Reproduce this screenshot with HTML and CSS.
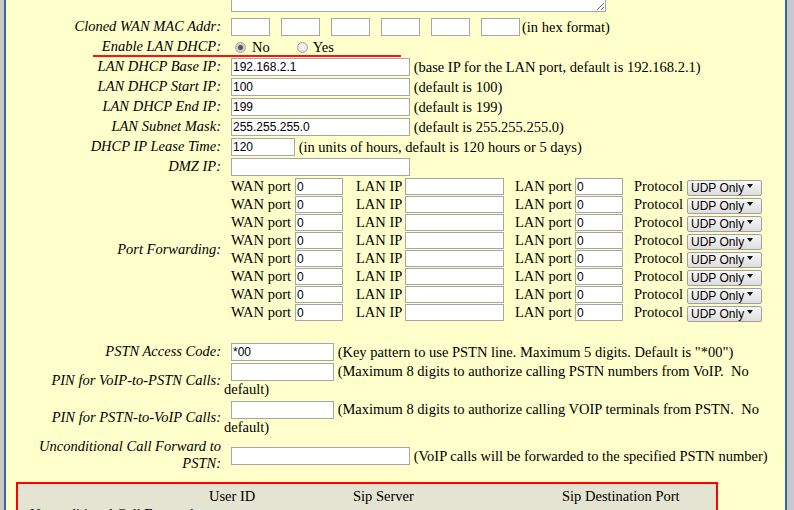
FILE: index.html
```html
<!DOCTYPE html>
<html>
<head>
<meta charset="utf-8">
<title>LAN Settings</title>
<link rel="stylesheet" href="styles.css">
</head>
<body>
<div class="page">
  <div class="form">
    <div class="lbl"></div>
    <div class="val top"><textarea class="ta"></textarea></div>

    <div class="lbl">Cloned WAN MAC Addr:</div>
    <div class="val mac">
      <div class="mac-set">
        <input class="in mac-in"><input class="in mac-in"><input class="in mac-in"><input class="in mac-in"><input class="in mac-in"><input class="in mac-in">
      </div>
      <span class="mac-note">(in hex format)</span>
    </div>

    <div class="lbl">Enable LAN DHCP:</div>
    <div class="val radios">
      <input type="radio" name="dhcp" class="rb rb-first" checked><span class="opt-no">No</span>
      <input type="radio" name="dhcp" class="rb rb-second"><span class="opt-yes">Yes</span>
    </div>

    <div class="lbl">LAN DHCP Base IP:</div>
    <div class="val"><input class="in w-long" value="192.168.2.1"> (base IP for the LAN port, default is 192.168.2.1)</div>

    <div class="lbl">LAN DHCP Start IP:</div>
    <div class="val"><input class="in w-long" value="100"> (default is 100)</div>

    <div class="lbl">LAN DHCP End IP:</div>
    <div class="val"><input class="in w-long" value="199"> (default is 199)</div>

    <div class="lbl">LAN Subnet Mask:</div>
    <div class="val"><input class="in w-long" value="255.255.255.0"> (default is 255.255.255.0)</div>

    <div class="lbl">DHCP IP Lease Time:</div>
    <div class="val"><input class="in w-short" value="120"> (in units of hours, default is 120 hours or 5 days)</div>

    <div class="lbl">DMZ IP:</div>
    <div class="val"><input class="in w-long" value=""></div>

    <div class="lbl">Port Forwarding:</div>
    <div class="val pf">
      <span class="pf-t">WAN port</span><input class="in pf-in" value="0"><span class="pf-t pf-gap13">LAN IP</span><input class="in pf-ip"><span class="pf-t pf-gap11">LAN port</span><input class="in pf-in" value="0"><span class="pf-t pf-gap11">Protocol</span><span class="sel"><select><option>UDP Only</option><option>TCP Only</option><option>Both</option></select></span>
      <span class="pf-t">WAN port</span><input class="in pf-in" value="0"><span class="pf-t pf-gap13">LAN IP</span><input class="in pf-ip"><span class="pf-t pf-gap11">LAN port</span><input class="in pf-in" value="0"><span class="pf-t pf-gap11">Protocol</span><span class="sel"><select><option>UDP Only</option><option>TCP Only</option><option>Both</option></select></span>
      <span class="pf-t">WAN port</span><input class="in pf-in" value="0"><span class="pf-t pf-gap13">LAN IP</span><input class="in pf-ip"><span class="pf-t pf-gap11">LAN port</span><input class="in pf-in" value="0"><span class="pf-t pf-gap11">Protocol</span><span class="sel"><select><option>UDP Only</option><option>TCP Only</option><option>Both</option></select></span>
      <span class="pf-t">WAN port</span><input class="in pf-in" value="0"><span class="pf-t pf-gap13">LAN IP</span><input class="in pf-ip"><span class="pf-t pf-gap11">LAN port</span><input class="in pf-in" value="0"><span class="pf-t pf-gap11">Protocol</span><span class="sel"><select><option>UDP Only</option><option>TCP Only</option><option>Both</option></select></span>
      <span class="pf-t">WAN port</span><input class="in pf-in" value="0"><span class="pf-t pf-gap13">LAN IP</span><input class="in pf-ip"><span class="pf-t pf-gap11">LAN port</span><input class="in pf-in" value="0"><span class="pf-t pf-gap11">Protocol</span><span class="sel"><select><option>UDP Only</option><option>TCP Only</option><option>Both</option></select></span>
      <span class="pf-t">WAN port</span><input class="in pf-in" value="0"><span class="pf-t pf-gap13">LAN IP</span><input class="in pf-ip"><span class="pf-t pf-gap11">LAN port</span><input class="in pf-in" value="0"><span class="pf-t pf-gap11">Protocol</span><span class="sel"><select><option>UDP Only</option><option>TCP Only</option><option>Both</option></select></span>
      <span class="pf-t">WAN port</span><input class="in pf-in" value="0"><span class="pf-t pf-gap13">LAN IP</span><input class="in pf-ip"><span class="pf-t pf-gap11">LAN port</span><input class="in pf-in" value="0"><span class="pf-t pf-gap11">Protocol</span><span class="sel"><select><option>UDP Only</option><option>TCP Only</option><option>Both</option></select></span>
      <span class="pf-t">WAN port</span><input class="in pf-in" value="0"><span class="pf-t pf-gap13">LAN IP</span><input class="in pf-ip"><span class="pf-t pf-gap11">LAN port</span><input class="in pf-in" value="0"><span class="pf-t pf-gap11">Protocol</span><span class="sel"><select><option>UDP Only</option><option>TCP Only</option><option>Both</option></select></span>
    </div>

    <div class="spacer"></div>

    <div class="lbl">PSTN Access Code:</div>
    <div class="val"><input class="in w-mid" value="*00"> (Key pattern to use PSTN line. Maximum 5 digits. Default is "*00")</div>

    <div class="lbl">PIN for VoIP-to-PSTN Calls:</div>
    <div class="val wrap"><input class="in w-mid" value=""> (Maximum 8 digits to authorize calling PSTN numbers from VoIP.&nbsp; No default)</div>

    <div class="lbl">PIN for PSTN-to-VoIP Calls:</div>
    <div class="val wrap"><input class="in w-mid" value=""> (Maximum 8 digits to authorize calling VOIP terminals from PSTN.&nbsp; No default)</div>

    <div class="lbl">Unconditional Call Forward to PSTN:</div>
    <div class="val mid"><input class="in w-long" value=""> (VoIP calls will be forwarded to the specified PSTN number)</div>
  </div>

  <div class="redbox">
    <div class="rb-row">
      <span></span><span>User ID</span><span>Sip Server</span><span>Sip Destination Port</span>
    </div>
    <div class="rb-row">
      <span class="rb-name">Unconditional Call Forward</span><span></span><span></span><span></span>
    </div>
  </div>

  <div class="annot"></div>
</div>
</body>
</html>
```

FILE: styles.css
```css
html, body {
  margin: 0;
  padding: 0;
}
body {
  background: #c9c9c9;
  height: 510px;
  overflow: hidden;
  font-family: "Liberation Serif", "Times New Roman", serif;
  font-size: 14.5px;
  color: #000;
}
.page {
  position: relative;
  margin-left: 4px;
  width: 779px;
  height: 510px;
  border-left: 2px solid #336699;
  border-right: 2px solid #336699;
  background: #ffffcc;
  overflow: hidden;
}
.form {
  display: grid;
  grid-template-columns: 218px 554px;
  row-gap: 2px;
}
.lbl {
  font-style: italic;
  text-align: right;
  padding: 0 3px 1px 20px;
  align-self: center;
  line-height: 17px;
}
.val {
  min-height: 18px;
  line-height: 18px;
  text-indent: 7px;
}
.val.mid {
  align-self: center;
}
.val.wrap {
  line-height: 17.5px;
}
.in {
  box-sizing: border-box;
  height: 18px;
  margin: 0;
  padding: 0 1px;
  border: 1px solid #a6a6a6;
  background: #fff;
  font-family: "Liberation Sans", Arial, sans-serif;
  font-size: 12px;
  color: #000;
  vertical-align: top;
  text-indent: 0;
  outline: none;
}
.w-long { width: 179px; }
.w-mid { width: 103px; }
.w-short { width: 64px; }

.val.top {
  min-height: 0;
  height: 16px;
  text-indent: 0;
  padding-left: 7px;
}
.ta {
  display: block;
  box-sizing: border-box;
  width: 375px;
  height: 12px;
  margin: 0;
  padding: 0;
  border: 1px solid #a6a6a6;
  border-top: none;
  background: #fff;
  resize: both;
  overflow: hidden;
}

.val.mac {
  display: flex;
  align-items: center;
  text-indent: 0;
  padding-left: 7px;
}
.mac-set {
  display: flex;
  gap: 11px;
}
.mac-in {
  width: 39px;
}
.mac-note {
  margin-left: 2px;
}

.val.radios {
  display: flex;
  align-items: center;
  text-indent: 0;
}
.rb {
  appearance: none;
  -webkit-appearance: none;
  box-sizing: border-box;
  width: 11px;
  height: 11px;
  margin: 0;
  border: 1px solid #a2a2a2;
  border-radius: 50%;
  background: radial-gradient(circle at 50% 40%, #f7f7f7 0, #dcdcdc 100%);
}
.rb:checked {
  background: radial-gradient(circle, #505050 0, #5a5a5a 2px, #c8c8c8 3px, #ececec 100%);
}
.rb-first { margin-left: 11px; }
.opt-no { margin-left: 6px; }
.rb-second { margin-left: 27px; }
.opt-yes { margin-left: 5px; }

.val.pf {
  display: grid;
  grid-template-columns: 64px 48px 62px 99px 71px 48px 64px 75px;
  grid-auto-rows: 18px;
  align-items: start;
  text-indent: 0;
  padding-left: 7px;
}
.pf-t {
  white-space: nowrap;
  line-height: 16px;
}
.pf-gap13 { padding-left: 13px; }
.pf-gap11 { padding-left: 11px; }
.pf-in {
  width: 48px;
  height: 17px;
}
.pf-ip {
  width: 99px;
  height: 17px;
}
.sel {
  position: relative;
  display: block;
  width: 75px;
  height: 16px;
}
.sel select {
  appearance: none;
  -webkit-appearance: none;
  box-sizing: border-box;
  width: 75px;
  height: 16px;
  margin: 0;
  padding: 0 0 0 3px;
  border: 1px solid #a0a0a0;
  border-radius: 2px;
  background: linear-gradient(#f8f8f8, #dddddd);
  font-family: "Liberation Sans", Arial, sans-serif;
  font-size: 12px;
  line-height: 14px;
  color: #000;
  outline: none;
}
.sel::after {
  content: "";
  position: absolute;
  right: 9px;
  top: 6px;
  border-left: 3px solid transparent;
  border-right: 3px solid transparent;
  border-top: 4px solid #111;
}

.spacer {
  grid-column: 1 / span 2;
  height: 17px;
}

.redbox {
  box-sizing: border-box;
  margin: 9px 0 0 10px;
  width: 702px;
  height: 60px;
  border: 2px solid #ff0000;
  background: #e4e4d2;
  padding-top: 3px;
}
.rb-row {
  display: grid;
  grid-template-columns: 191px 144px 209px 1fr;
  line-height: 18px;
  white-space: nowrap;
}
.rb-name {
  padding-left: 12px;
}

.annot {
  position: absolute;
  left: 87px;
  top: 55px;
  width: 308px;
  height: 2px;
  background: #ff1111;
}
```
